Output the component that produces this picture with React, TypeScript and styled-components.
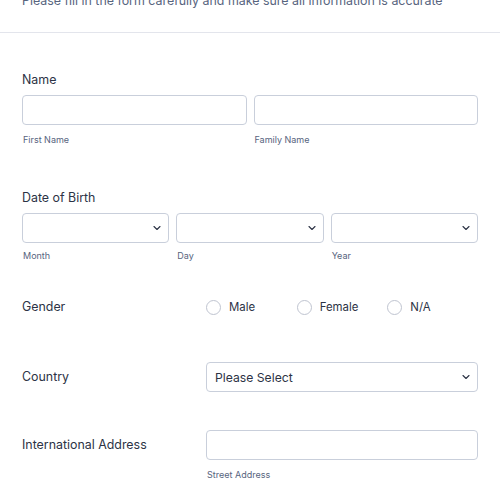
import React from 'react';
import styled, { createGlobalStyle } from 'styled-components';
import { ChevronDown } from 'lucide-react';

const GlobalStyle = createGlobalStyle`
  html, body {
    margin: 0;
    padding: 0;
    background: #ffffff;
    font-family: Inter, "Noto Sans", sans-serif;
    color: #2c3345;
  }
  * { box-sizing: border-box; }
`;

const Page = styled.div`
  width: 500px;
  height: 484px;
  overflow: hidden;
`;

const Form = styled.form`
  margin-top: -8px;
`;

const Header = styled.div`
  padding: 0 22px 22px;
  border-bottom: 1px solid #e3e5ec;
`;

const Subtitle = styled.p`
  margin: 0;
  font-size: 12.4px;
  line-height: 18px;
  color: #57647e;
  white-space: nowrap;
`;

const Field = styled.div<{ $top: number }>`
  padding: ${(p) => p.$top}px 22px 0;
`;

const InlineField = styled.div<{ $top: number }>`
  display: grid;
  grid-template-columns: 184px 1fr;
  padding: ${(p) => p.$top}px 22px 0;
`;

const Label = styled.div`
  font-size: 12.4px;
  font-weight: 400;
  line-height: 20px;
  margin-bottom: 5px;
  color: #2c3345;
`;

const SideLabel = styled.div<{ $h: number }>`
  font-size: 12.4px;
  font-weight: 400;
  line-height: ${(p) => p.$h}px;
  white-space: nowrap;
  color: #2c3345;
`;

const Row = styled.div<{ $cols: number }>`
  display: grid;
  grid-template-columns: repeat(${(p) => p.$cols}, 1fr);
  gap: 7px;
`;

const Input = styled.div`
  height: 30px;
  border: 1px solid #c9cfdb;
  border-radius: 4px;
  background: #fff;
`;

const Select = styled.div`
  height: 30px;
  border: 1px solid #c9cfdb;
  border-radius: 4px;
  background: #fff;
  display: flex;
  align-items: center;
  justify-content: space-between;
  padding: 0 5px 0 8px;
  font-size: 12.2px;
  color: #2c3345;
  svg { color: #2c3345; }
`;

const Sub = styled.div<{ $gap?: number }>`
  font-size: 9px;
  line-height: 14px;
  color: #57647e;
  margin-top: ${(p) => p.$gap ?? 8}px;
  padding-left: 1px;
`;

const Radios = styled.div`
  display: grid;
  grid-template-columns: repeat(3, 1fr);
  height: 20px;
  align-items: center;
`;

const Radio = styled.label`
  display: flex;
  align-items: center;
  gap: 8px;
  font-size: 11.4px;
  color: #2c3345;
`;

const Circle = styled.span`
  width: 15px;
  height: 15px;
  border-radius: 50%;
  border: 1px solid #bfc4d0;
  background: #fff;
`;

const Chevron = () => <ChevronDown size={12} strokeWidth={2.2} />;

export default function App() {
  return (
    <Page>
      <GlobalStyle />
      <Form>
        <Header>
          <Subtitle>Please fill in the form carefully and make sure all information is accurate</Subtitle>
        </Header>

        <Field $top={37}>
          <Label>Name</Label>
          <Row $cols={2}>
            <Input />
            <Input />
          </Row>
          <Row $cols={2}>
            <Sub>First Name</Sub>
            <Sub>Family Name</Sub>
          </Row>
        </Field>

        <Field $top={41}>
          <Label>Date of Birth</Label>
          <Row $cols={3}>
            <Select><span /><Chevron /></Select>
            <Select><span /><Chevron /></Select>
            <Select><span /><Chevron /></Select>
          </Row>
          <Row $cols={3}>
            <Sub $gap={6}>Month</Sub>
            <Sub $gap={6}>Day</Sub>
            <Sub $gap={6}>Year</Sub>
          </Row>
        </Field>

        <InlineField $top={34}>
          <SideLabel $h={20}>Gender</SideLabel>
          <Radios>
            <Radio><Circle />Male</Radio>
            <Radio><Circle />Female</Radio>
            <Radio><Circle />N/A</Radio>
          </Radios>
        </InlineField>

        <InlineField $top={45}>
          <SideLabel $h={30}>Country</SideLabel>
          <Select>
            <span>Please Select</span>
            <Chevron />
          </Select>
        </InlineField>

        <InlineField $top={38}>
          <SideLabel $h={30}>International Address</SideLabel>
          <div>
            <Input />
            <Sub>Street Address</Sub>
          </div>
        </InlineField>
      </Form>
    </Page>
  );
}
